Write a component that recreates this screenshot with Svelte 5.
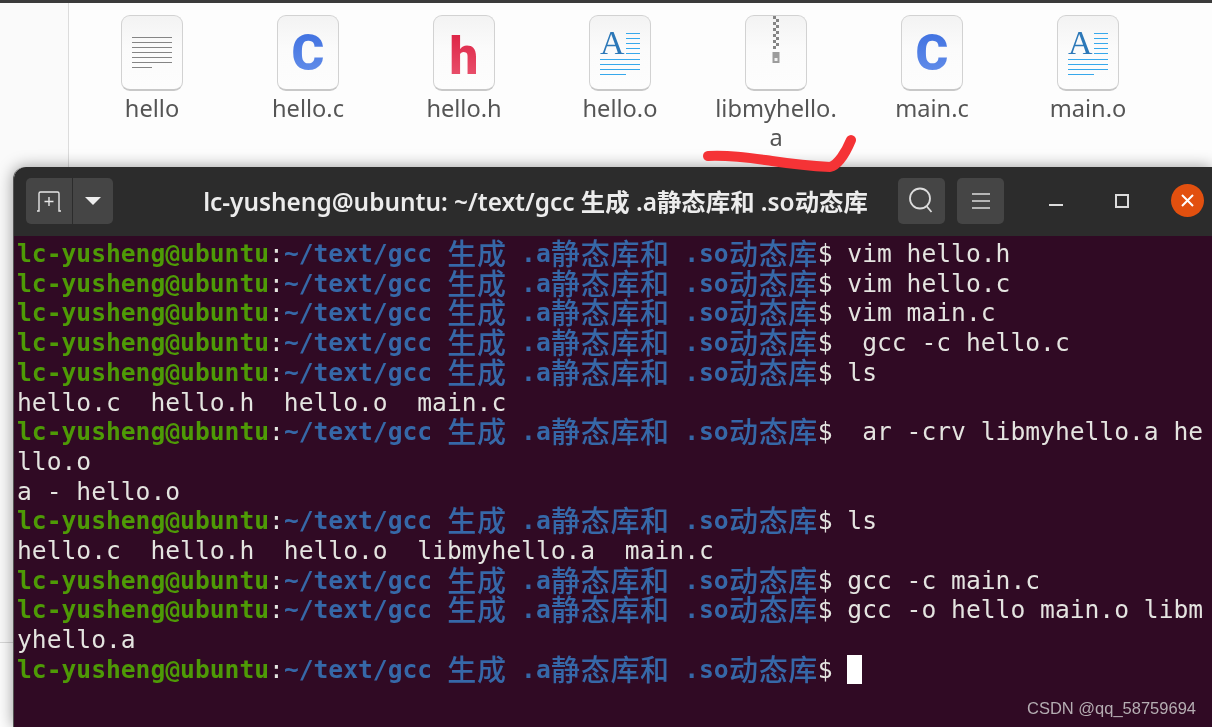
<script>
  const files = [
    { name: "hello", kind: "text" },
    { name: "hello.c", kind: "c" },
    { name: "hello.h", kind: "h" },
    { name: "hello.o", kind: "doc" },
    { name: "libmyhello.\na", kind: "zip" },
    { name: "main.c", kind: "c" },
    { name: "main.o", kind: "doc" },
  ];

  const path = "~/text/gcc 生成 .a静态库和 .so动态库";
  const lines = [
    { cmd: "vim hello.h" },
    { cmd: "vim hello.c" },
    { cmd: "vim main.c" },
    { cmd: " gcc -c hello.c" },
    { cmd: "ls" },
    { out: "hello.c  hello.h  hello.o  main.c" },
    { cmd: " ar -crv libmyhello.a he" },
    { out: "llo.o" },
    { out: "a - hello.o" },
    { cmd: "ls" },
    { out: "hello.c  hello.h  hello.o  libmyhello.a  main.c" },
    { cmd: "gcc -c main.c" },
    { cmd: "gcc -o hello main.o libm" },
    { out: "yhello.a" },
    { cmd: "", cursor: true },
  ];

  // terminal CJK glyphs take two cells, so split them out of the run
  const pathParts = path.split(/([\u4e00-\u9fff])/).filter(Boolean);
  const isCjk = (s) => /[\u4e00-\u9fff]/.test(s);
</script>

<div class="desktop">
  <aside class="sidebar"></aside>
  <main class="files">
    {#each files as f}
      <div class="file">
        <div class="icon">
          {#if f.kind === "text"}
            <div class="rules">
              {#each [1, 1, 1, 1, 1, 1, 0.5] as w}
                <i style="width: {w * 100}%"></i>
              {/each}
            </div>
          {:else if f.kind === "c"}
            <span class="glyph c">C</span>
          {:else if f.kind === "h"}
            <span class="glyph h">h</span>
          {:else if f.kind === "doc"}
            <div class="doc">
              <span class="big-a">A</span>
              <div class="side-rules"><i></i><i></i><i></i><i></i><i></i></div>
              <div class="blue-rules">
                {#each [1, 1, 1, 0.65] as w}
                  <i style="width: {w * 100}%"></i>
                {/each}
              </div>
            </div>
          {:else}
            <svg class="zipper" width="10" height="47" viewBox="0 0 10 47">
              <path d="M2 0h3v3H2zM5 3h3v3H5zM2 6h3v3H2zM5 9h3v3H5zM2 12h3v3H2zM5 15h3v3H5zM2 18h3v3H2zM5 21h3v3H5zM2 24h3v3H2zM5 27h3v3H5zM2 30h3v3H2z" fill="#858585" />
              <rect x="1.5" y="36" width="7" height="11" fill="#9c9c9c" />
              <rect x="3.5" y="42" width="3" height="3" fill="#f2f2f2" />
            </svg>
          {/if}
        </div>
        <div class="label">{f.name}</div>
      </div>
    {/each}
  </main>

  <svg class="scribble" width="170" height="50" viewBox="0 0 170 50">
    <path d="M6 26C30 25 48 28 70 31C90 34 108 36 128 37C136 35 144 22 149 10" fill="none" stroke="#f53336" stroke-width="10" stroke-linecap="round" stroke-linejoin="round" />
  </svg>

  <section class="window">
    <header class="titlebar">
      <div class="split">
        <button class="tb tb-new" aria-label="New tab">
          <svg width="26" height="24" viewBox="0 0 26 24" fill="none" stroke="#e6e6e6" stroke-width="1.4">
            <path d="M1 22h2V4.5Q3 3 4.5 3h17Q23 3 23 4.5V22h2" />
            <path d="M13 8v9M8.5 12.5h9" />
          </svg>
        </button>
        <button class="tb tb-drop" aria-label="Tab menu">
          <svg width="18" height="10" viewBox="0 0 18 10"><path d="M1 1h16L9 9z" fill="#eee" /></svg>
        </button>
      </div>
      <div class="title">lc-yusheng@ubuntu: ~/text/gcc 生成 .a静态库和 .so动态库</div>
      <button class="tb tb-round" aria-label="Search">
        <svg width="28" height="28" viewBox="0 0 28 28" fill="none" stroke="#dcdcdc" stroke-width="1.8">
          <circle cx="12" cy="11.5" r="10" />
          <path d="M18.5 19l5 6" />
        </svg>
      </button>
      <button class="tb tb-round" aria-label="Menu">
        <svg width="18" height="16" viewBox="0 0 18 16" stroke="#dcdcdc" stroke-width="1.6">
          <path d="M0 1h18M0 8h18M0 15h18" />
        </svg>
      </button>
      <div class="win-controls">
        <svg class="min" width="14" height="2" viewBox="0 0 14 2"><path d="M0 1h14" stroke="#dcdcdc" stroke-width="2" /></svg>
        <svg class="max" width="14" height="14" viewBox="0 0 14 14" fill="none"><rect x="1" y="1" width="12" height="12" stroke="#dcdcdc" stroke-width="2" /></svg>
        <div class="close">
          <svg width="13" height="13" viewBox="0 0 13 13"><path d="M1 1l11 11M12 1L1 12" stroke="#fff" stroke-width="2" /></svg>
        </div>
      </div>
    </header>

    <div class="term">
      {#each lines as line}
        <div class="row">
          {#if line.out !== undefined}
            <span>{line.out}</span>
          {:else}
            <span class="user">lc-yusheng@ubuntu</span><span>:</span><span class="path">{#each pathParts as p}{#if isCjk(p)}<span class="cjk">{p}</span>{:else}{p}{/if}{/each}</span><span>$ {line.cmd}</span>{#if line.cursor}<span class="cursor"></span>{/if}
          {/if}
        </div>
      {/each}
      <div class="watermark">CSDN @qq_58759694</div>
    </div>
  </section>
</div>

<style>
  :global(body) {
    margin: 0;
    background: #fff;
    overflow: hidden;
  }

  .desktop {
    position: relative;
    display: flex;
    align-items: flex-start;
    width: 1212px;
    height: 727px;
    overflow: hidden;
    background: #fdfdfd;
    border-top: 3px solid #3b3b3b;
    box-sizing: border-box;
    filter: blur(0.55px);
  }

  .sidebar {
    width: 69px;
    height: 640px;
    box-sizing: border-box;
    flex-shrink: 0;
    background: #fafafa;
    border-right: 1px solid #dcdcdc;
    border-bottom: 1px solid #d8d8d8;
  }

  .files {
    display: flex;
    align-items: flex-start;
    padding: 12px 0 0 5px;
  }

  .file {
    width: 156px;
    display: flex;
    flex-direction: column;
    align-items: center;
  }

  .icon {
    position: relative;
    width: 62px;
    height: 76px;
    box-sizing: border-box;
    border: 1px solid #d2d2d2;
    border-bottom: 2px solid #c8c8c8;
    border-radius: 9px;
    background: linear-gradient(#f3f3f3, #fbfbfb 45%, #fdfdfd);
    display: flex;
    align-items: center;
    justify-content: center;
    overflow: hidden;
  }

  .label {
    margin-top: 3px;
    width: 130px;
    font-family: "Noto Sans", sans-serif;
    font-size: 23.6px;
    line-height: 29px;
    color: #555;
    text-align: center;
    white-space: pre-line;
  }

  .rules {
    display: flex;
    flex-direction: column;
    gap: 4px;
    width: 40px;
  }

  .rules i {
    display: block;
    height: 1px;
    background: #858585;
  }

  .glyph {
    font-family: Roboto, "Liberation Sans", sans-serif;
    font-weight: 900;
    line-height: 1;
  }

  .glyph.c {
    font-size: 50px;
    background: linear-gradient(#3d6fe0, #6690ea);
    background-clip: text;
    -webkit-background-clip: text;
    color: transparent;
  }

  .glyph.h {
    font-size: 51px;
    margin-top: 8px;
    background: linear-gradient(#dd2244, #ea5570);
    background-clip: text;
    -webkit-background-clip: text;
    color: transparent;
  }

  .doc {
    display: grid;
    grid-template-columns: 25px 14px;
    column-gap: 1px;
    width: 40px;
  }

  .big-a {
    font-family: "Liberation Serif", serif;
    font-size: 34px;
    line-height: 24px;
    color: #2c78b8;
  }

  .side-rules {
    display: flex;
    flex-direction: column;
    gap: 4px;
    margin-top: 2px;
  }

  .side-rules i,
  .blue-rules i {
    display: block;
    height: 1px;
    background: #36a8ec;
  }

  .blue-rules {
    grid-column: 1 / 3;
    display: flex;
    flex-direction: column;
    gap: 4px;
    margin-top: 4px;
  }

  .zipper {
    align-self: flex-start;
  }

  .scribble {
    position: absolute;
    left: 702px;
    top: 127px;
    z-index: 2;
  }

  .window {
    position: absolute;
    left: 13px;
    top: 164px;
    right: 0;
    bottom: 0;
    display: flex;
    flex-direction: column;
    border-left: 1px solid #555;
    border-radius: 12px 0 0 0;
    box-shadow: 0 0 16px rgba(0, 0, 0, 0.4);
  }

  .titlebar {
    height: 69px;
    flex-shrink: 0;
    box-sizing: border-box;
    display: flex;
    align-items: center;
    gap: 12px;
    padding: 0 8px 2px 12px;
    background: #2c2c2c;
    border-radius: 12px 0 0 0;
  }

  .split {
    display: flex;
    gap: 1px;
  }

  .tb {
    height: 46px;
    padding: 0;
    border: none;
    border-radius: 5px;
    background: #454545;
    display: flex;
    align-items: center;
    justify-content: center;
  }

  .tb-new {
    width: 46px;
    border-radius: 5px 0 0 5px;
  }

  .tb-drop {
    width: 40px;
    border-radius: 0 5px 5px 0;
  }

  .tb-round {
    width: 47px;
  }

  .title {
    flex: 1;
    min-width: 0;
    padding-left: 60px;
    font-family: "Noto Sans", "Noto Sans CJK SC", sans-serif;
    font-size: 24.4px;
    font-weight: 600;
    color: #ececec;
    text-align: center;
    white-space: nowrap;
  }

  .win-controls {
    display: flex;
    align-items: center;
    margin-left: 33px;
  }

  .min {
    margin: 9px 52px 0 0;
  }

  .max {
    margin-right: 42px;
  }

  .close {
    width: 33px;
    height: 33px;
    border-radius: 50%;
    background: #e2500f;
    display: flex;
    align-items: center;
    justify-content: center;
  }

  .term {
    position: relative;
    flex: 1;
    padding: 3px 0 0 3px;
    background: #300a24;
    color: #e4e4e0;
    font-family: "DejaVu Sans Mono", monospace;
    font-size: 24.63px;
  }

  .row {
    height: 29.71px;
    line-height: 29.71px;
    white-space: pre;
  }

  .user {
    color: #4e9a06;
    font-weight: 700;
  }

  .path {
    color: #3668a8;
    font-weight: 700;
  }

  .cjk {
    display: inline-block;
    width: 29.66px;
    height: 29.71px;
    vertical-align: top;
    text-align: center;
    font-family: "Noto Sans CJK SC", sans-serif;
    font-size: 29px;
    line-height: 26px;
    font-weight: 500;
  }

  .cursor {
    display: inline-block;
    width: 15px;
    height: 29px;
    vertical-align: top;
    background: #fff;
  }

  .watermark {
    position: absolute;
    right: 16px;
    bottom: 9px;
    font-family: "Liberation Sans", sans-serif;
    font-size: 16.5px;
    color: #b5adb2;
  }
</style>
